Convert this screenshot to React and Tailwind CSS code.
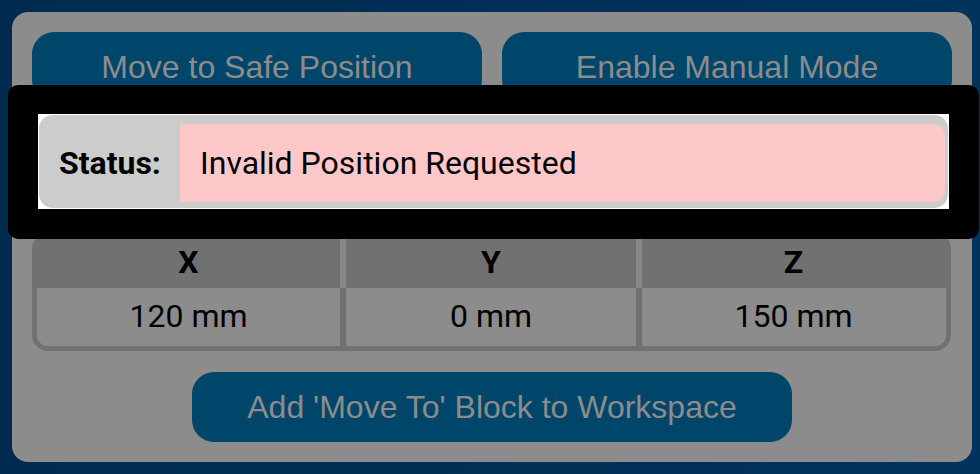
export default function App() {
  const btn =
    "h-[70px] rounded-[22px] bg-[#00466a] text-[#8c8c8c] text-[32px] flex items-center justify-center";
  return (
    <div
      className="w-[980px] h-[474px] p-3 bg-gradient-to-r from-[#012a4f] to-[#01345c]"
      style={{ fontFamily: "Roboto, 'Liberation Sans', sans-serif" }}
    >
      <div className="relative w-[960px] h-[450px] rounded-[16px] bg-[#8c8c8c] p-5 flex flex-col">
        <div className="grid grid-cols-2 gap-5" style={{ fontFamily: "'Liberation Sans', Arial, sans-serif" }}>
          <div className={btn}>Move to Safe Position</div>
          <div className={btn}>Enable Manual Mode</div>
        </div>
        <div className="h-[91px] mt-5" />
        <div className="mt-5 w-[919px] rounded-[16px] border-[5px] border-[#717171] overflow-hidden text-black text-[32px]">
          <div className="grid grid-cols-[303px_6px_290px_6px_303px] h-[50px] bg-[#717171] font-bold">
            <div className="flex items-center justify-center pb-[14px]">X</div>
            <div className="bg-[#888888]" />
            <div className="flex items-center justify-center pb-[14px]">Y</div>
            <div className="bg-[#888888]" />
            <div className="flex items-center justify-center pb-[14px] rounded-tr-[8px]">Z</div>
          </div>
          <div className="grid grid-cols-[303px_6px_290px_6px_303px] h-[58px] bg-[#8c8c8c]">
            <div className="flex items-center justify-center pb-[2px]">120 mm</div>
            <div className="bg-[#717171]" />
            <div className="flex items-center justify-center pb-[2px]">0 mm</div>
            <div className="bg-[#717171]" />
            <div className="flex items-center justify-center pb-[2px]">150 mm</div>
          </div>
        </div>
        <div className="mt-[21px] flex justify-center">
          <div
            className={btn + " w-[600px]"}
            style={{ fontFamily: "'Liberation Sans', Arial, sans-serif" }}
          >
            Add 'Move To' Block to Workspace
          </div>
        </div>

        <div className="absolute left-[-4px] top-[73px] w-[971px] h-[154px] rounded-[10px] bg-black pl-[30px] pt-[29px]">
          <div className="w-[911px] h-[95px] bg-white p-px">
            <div className="w-[909px] h-[93px] rounded-[14px] bg-[#cccccc] flex pt-[9px] pr-[3px] pb-[6px]">
              <div className="w-[141px] flex items-center pl-5 text-[32px] font-bold text-black -mt-[9px]">
                <span className="mt-[9px]">Status:</span>
              </div>
              <div className="flex-1 h-[78px] bg-[#ffc8c8] rounded-r-[12px] flex items-center pl-5 text-[32px] text-black">
                Invalid Position Requested
              </div>
            </div>
          </div>
        </div>
      </div>
    </div>
  );
}
